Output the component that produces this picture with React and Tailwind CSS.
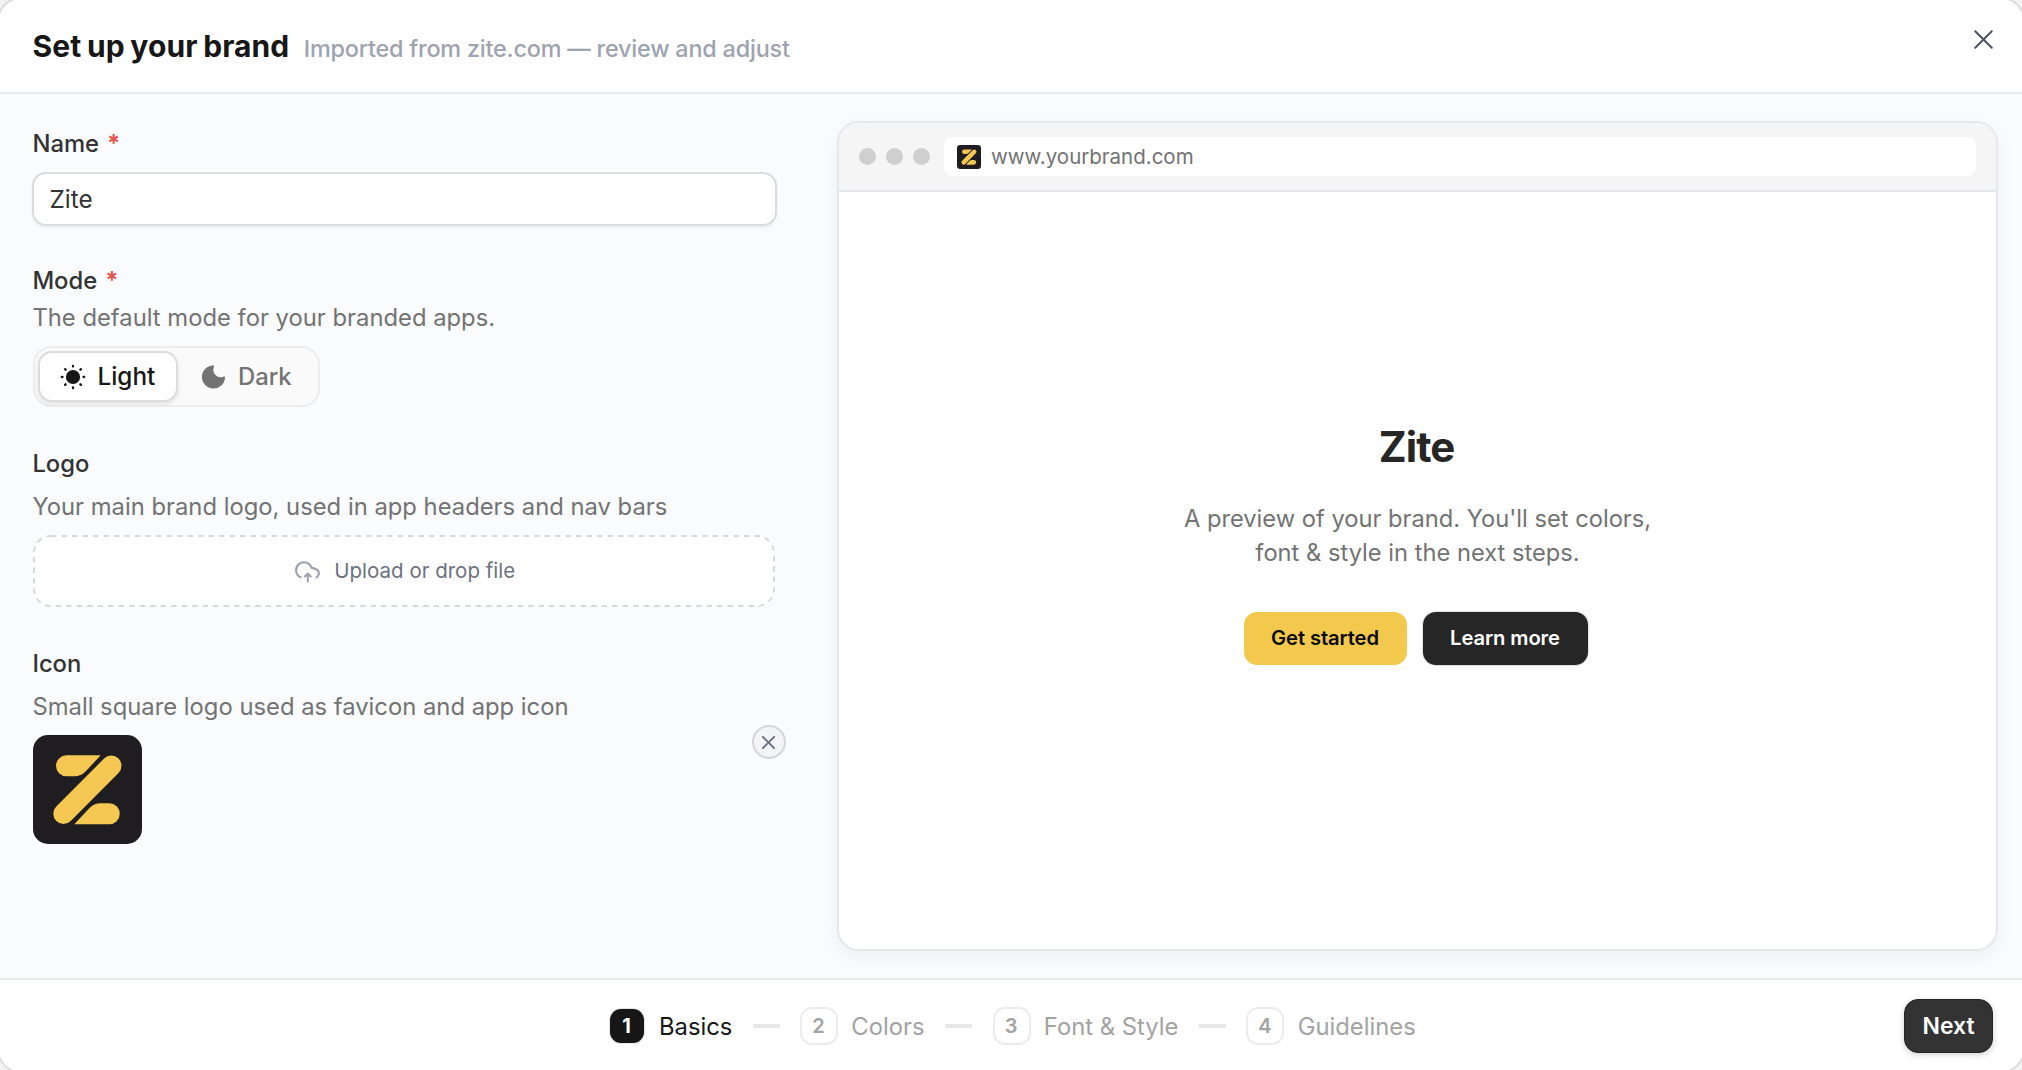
import React from "react";

function CloseIcon({ className, strokeWidth = 2 }) {
  return (
    <svg className={className} viewBox="0 0 20 20" fill="none" stroke="currentColor" strokeWidth={strokeWidth} strokeLinecap="round">
      <path d="M1.3 1.3 18.7 18.7M18.7 1.3 1.3 18.7" />
    </svg>
  );
}

function BrandMark({ className }) {
  return (
    <svg className={className} viewBox="0 0 109 109">
      <rect width="109" height="109" rx="15" fill="#201d20" />
      <g fill="#f4c852">
        <path d="M33.5 20.3H67.7L52.5 36.6Q48 41.3 41.5 41.3H33.5A10.5 10.5 0 0 1 33.5 20.3Z" />
        <path d="M76.2 89.3H41.3L56.5 73Q61 68.2 67.5 68.2H76.2A10.5 10.5 0 0 1 76.2 89.3Z" />
      </g>
      <path d="M78.3 30.8 30.5 78.8" stroke="#f4c852" strokeWidth="20.4" strokeLinecap="round" />
    </svg>
  );
}

function SunIcon() {
  return (
    <svg className="size-[26px]" viewBox="-13 -13 26 26" stroke="#171717" strokeWidth="2.3" strokeLinecap="round">
      <circle r="7.1" fill="#171717" stroke="none" />
      <path d="M0-11.2V-10.5M0 10.5V11.2M-11.2 0H-10.5M10.5 0H11.2M-7.9-7.9-7.3-7.3M7.3 7.3 7.9 7.9M-7.9 7.9-7.3 7.3M7.3-7.3 7.9-7.9" />
    </svg>
  );
}

function MoonIcon() {
  return (
    <svg className="size-6" viewBox="0 0 24 24" fill="#737373">
      <path d="M10.4.4C11.7.1 12.3 1 11.8 2.2A7.4 7.4 0 0 0 21.3 11.7C22.5 11.2 23.3 11.9 23 13.2A11.6 11.6 0 1 1 10.4.4Z" />
    </svg>
  );
}

function CloudUploadIcon() {
  return (
    <svg className="h-[22px] w-[26px]" viewBox="0 0 26 22" fill="none" stroke="#9ca3af" strokeWidth="2.1" strokeLinecap="round" strokeLinejoin="round">
      <path d="M5.5 16.2A7.9 7.9 0 1 1 16.6 6.9Q24 8 23.9 12.6Q23.7 15 21.6 16.4" />
      <path d="M12.8 20.4V13M9.8 15.4 12.8 12.5 15.8 15.4" />
    </svg>
  );
}

function Label({ children, required }) {
  return (
    <div className="-ml-[0.6px] flex h-[34px] gap-[9px] pt-px text-[23.8px] leading-[34px] font-medium text-[#333333]">
      <span>{children}</span>
      {required && <span className="-ml-px font-bold text-[#e5554f]">*</span>}
    </div>
  );
}

function Hint({ children }) {
  return <p className="-ml-[0.6px] h-[34px] pt-px text-[23.8px] leading-[34px] whitespace-nowrap text-[#737373]">{children}</p>;
}

const inactiveSteps = [
  ["2", "Colors"],
  ["3", "Font & Style"],
  ["4", "Guidelines"],
];

export default function App() {
  return (
    <div className="h-[1070px] w-[2022px] overflow-hidden bg-[#f3f3f3] font-['Inter',sans-serif]">
      <div className="-mt-[3px] -ml-[3px] h-[1076px] w-[2028px] overflow-hidden rounded-[24px] border-2 border-[#dedede] bg-white p-px">
        <div className="flex h-[1070px] w-[2022px] flex-col">
          <header className="flex h-[94px] shrink-0 justify-between border-b-2 border-[#e8e9eb] pr-[29px] pl-[32.5px]">
            <div className="flex items-baseline gap-[14.5px] pt-[26px] whitespace-nowrap">
              <h1 className="text-[30px] leading-[40px] font-bold tracking-[0.08px] [word-spacing:-1.5px] text-[#171717]">Set up your brand</h1>
              <p className="text-[23.4px] leading-[40px] font-medium tracking-[-0.2px] text-[#9ea3b0]">Imported from zite.com — review and adjust</p>
            </div>
            <button className="mt-[30px] size-[19px] text-[#4b5162]">
              <CloseIcon className="size-[19px]" />
            </button>
          </header>

          <main className="flex min-h-0 flex-1 justify-between bg-[#fafbfd] pr-6 pl-[33px]">
            <section className="flex w-[742px] flex-col pt-8">
              <Label required>Name</Label>
              <div className="-mr-[2px] -ml-[1.5px] mt-3 flex h-[54px] items-center rounded-[14px] border-2 border-[#d9dbdc] bg-white pt-px pl-4 text-[24.3px] text-[#333333] shadow-[0_2px_3px_rgba(0,0,0,0.05)]">
                Zite
              </div>

              <div className="mt-[37px]">
                <Label required>Mode</Label>
              </div>
              <div className="mt-[3px]">
                <Hint>The default mode for your branded apps.</Hint>
              </div>
              <div className="mt-3 flex h-[61px] w-[287px] items-center rounded-[18px] border-2 border-[#ededed] bg-[#fafafa] pl-[3px] text-[24px] font-medium">
                <div className="flex h-[51px] w-[140px] items-center rounded-[14px] border-2 border-[#dddddd] bg-white pl-5 text-[#171717] shadow-[0_2px_4px_rgba(0,0,0,0.1)]">
                  <SunIcon />
                  <span className="ml-[11.5px] text-[24.3px]">Light</span>
                </div>
                <div className="ml-[24px] flex items-center text-[#737373]">
                  <MoonIcon />
                  <span className="ml-[12px] text-[23.8px]">Dark</span>
                </div>
              </div>

              <div className="mt-[39px]">
                <Label>Logo</Label>
              </div>
              <div className="mt-[9px]">
                <Hint>Your main brand logo, used in app headers and nav bars</Hint>
              </div>
              <div className="mt-3 h-[72px] shrink-0">
                <div className="relative flex h-[72px] items-center justify-center gap-[13.5px] pl-[2px] text-[20.5px] text-[#6b7280]">
                  <svg className="absolute inset-0 h-[72px] w-[742px]" fill="none">
                    <rect x="1" y="1" width="740" height="70" rx="17" fill="#ffffff" stroke="#d7dadd" strokeWidth="2" strokeDasharray="5.5 5" />
                  </svg>
                  <span className="relative pt-px"><CloudUploadIcon /></span>
                  <span className="relative">Upload or drop file</span>
                </div>
              </div>

              <div className="mt-[39px]">
                <Label>Icon</Label>
              </div>
              <div className="mt-[9px]">
                <Hint>Small square logo used as favicon and app icon</Hint>
              </div>
              <div className="relative mt-3 h-[109px]">
                <BrandMark className="size-[109px]" />
                <button className="absolute -top-[10px] -right-[11px] flex size-[34px] items-center justify-center rounded-full border-2 border-[#d3d5d9] bg-[#f3f4f6] text-[#6b7280]">
                  <CloseIcon className="mr-px size-[13px]" strokeWidth={3} />
                </button>
              </div>
            </section>

            <section className="mt-[27px] h-[830px] w-[1161px] overflow-hidden rounded-[22px] border-2 border-[#e5e7eb] bg-white shadow-[0_6px_18px_rgba(0,0,0,0.05)]">
              <div className="flex h-[69px] items-center border-b-2 border-[#e5e7eb] bg-[#f5f5f5] pr-5 pl-5">
                <div className="flex gap-[10px]">
                  <span className="size-[17px] rounded-full bg-[#cfcfcf]" />
                  <span className="size-[17px] rounded-full bg-[#cfcfcf]" />
                  <span className="size-[17px] rounded-full bg-[#cfcfcf]" />
                </div>
                <div className="ml-[14px] flex h-[39px] flex-1 items-center rounded-[8px] bg-white pl-[13px] text-[20.5px] text-[#737373]">
                  <BrandMark className="size-6" />
                  <span className="ml-[10px] pt-px">www.yourbrand.com</span>
                </div>
              </div>
              <div className="flex flex-col items-center pt-[230px]">
                <h2 className="mr-[2px] text-[42px] leading-[50px] font-bold tracking-[-0.9px] text-[#262626]">Zite</h2>
                <p className="mt-[30px] w-[500px] text-center text-[23.7px] leading-[34px] text-[#737373]">
                  A preview of your brand. You'll set colors,<br />font &amp; style in the next steps.
                </p>
                <div className="mt-[42px] mr-[4px] flex gap-4 text-[20.2px] font-semibold tracking-[-0.1px]">
                  <button className="h-[53px] w-[163px] rounded-[13px] bg-[#f2c94c] text-[#0a0a0a]">Get started</button>
                  <button className="h-[53px] w-[165px] rounded-[13px] bg-[#262626] text-white shadow-[0_0_0_1px_rgba(0,0,0,0.12)]">Learn more</button>
                </div>
              </div>
            </section>
          </main>

          <footer className="flex h-[92px] shrink-0 items-center border-t-2 border-[#e5e7eb] bg-white pt-[2px] pr-[29px] pl-[610px] text-[23.8px] text-[#a3a3a3]">
            <span className="flex size-[34px] items-center justify-center rounded-[11px] bg-[#171717] pr-px text-[20px] font-bold text-white shadow-[0_0_0_1px_rgba(0,0,0,0.1)]">1</span>
            <span className="ml-[15px] w-[73px] pt-px whitespace-nowrap text-[#171717]">Basics</span>
            {inactiveSteps.map(([number, name]) => (
              <div key={number} className="flex items-center">
                <span className="ml-[20.5px] h-[3.5px] w-[27px] bg-[#e8e8e8]" />
                <span className="ml-[20.5px] flex size-[38px] items-center justify-center rounded-[12px] border-2 border-[#ececec] bg-white pr-px text-[20px] font-semibold">{number}</span>
                <span className="ml-[13.3px] pt-px whitespace-nowrap">{name}</span>
              </div>
            ))}
            <button className="ml-auto h-[54px] w-[89px] rounded-[14px] border border-[#262626] bg-[#333333] text-[23px] font-semibold text-white shadow-[0_2px_6px_rgba(0,0,0,0.18)]">Next</button>
          </footer>
        </div>
      </div>
    </div>
  );
}
